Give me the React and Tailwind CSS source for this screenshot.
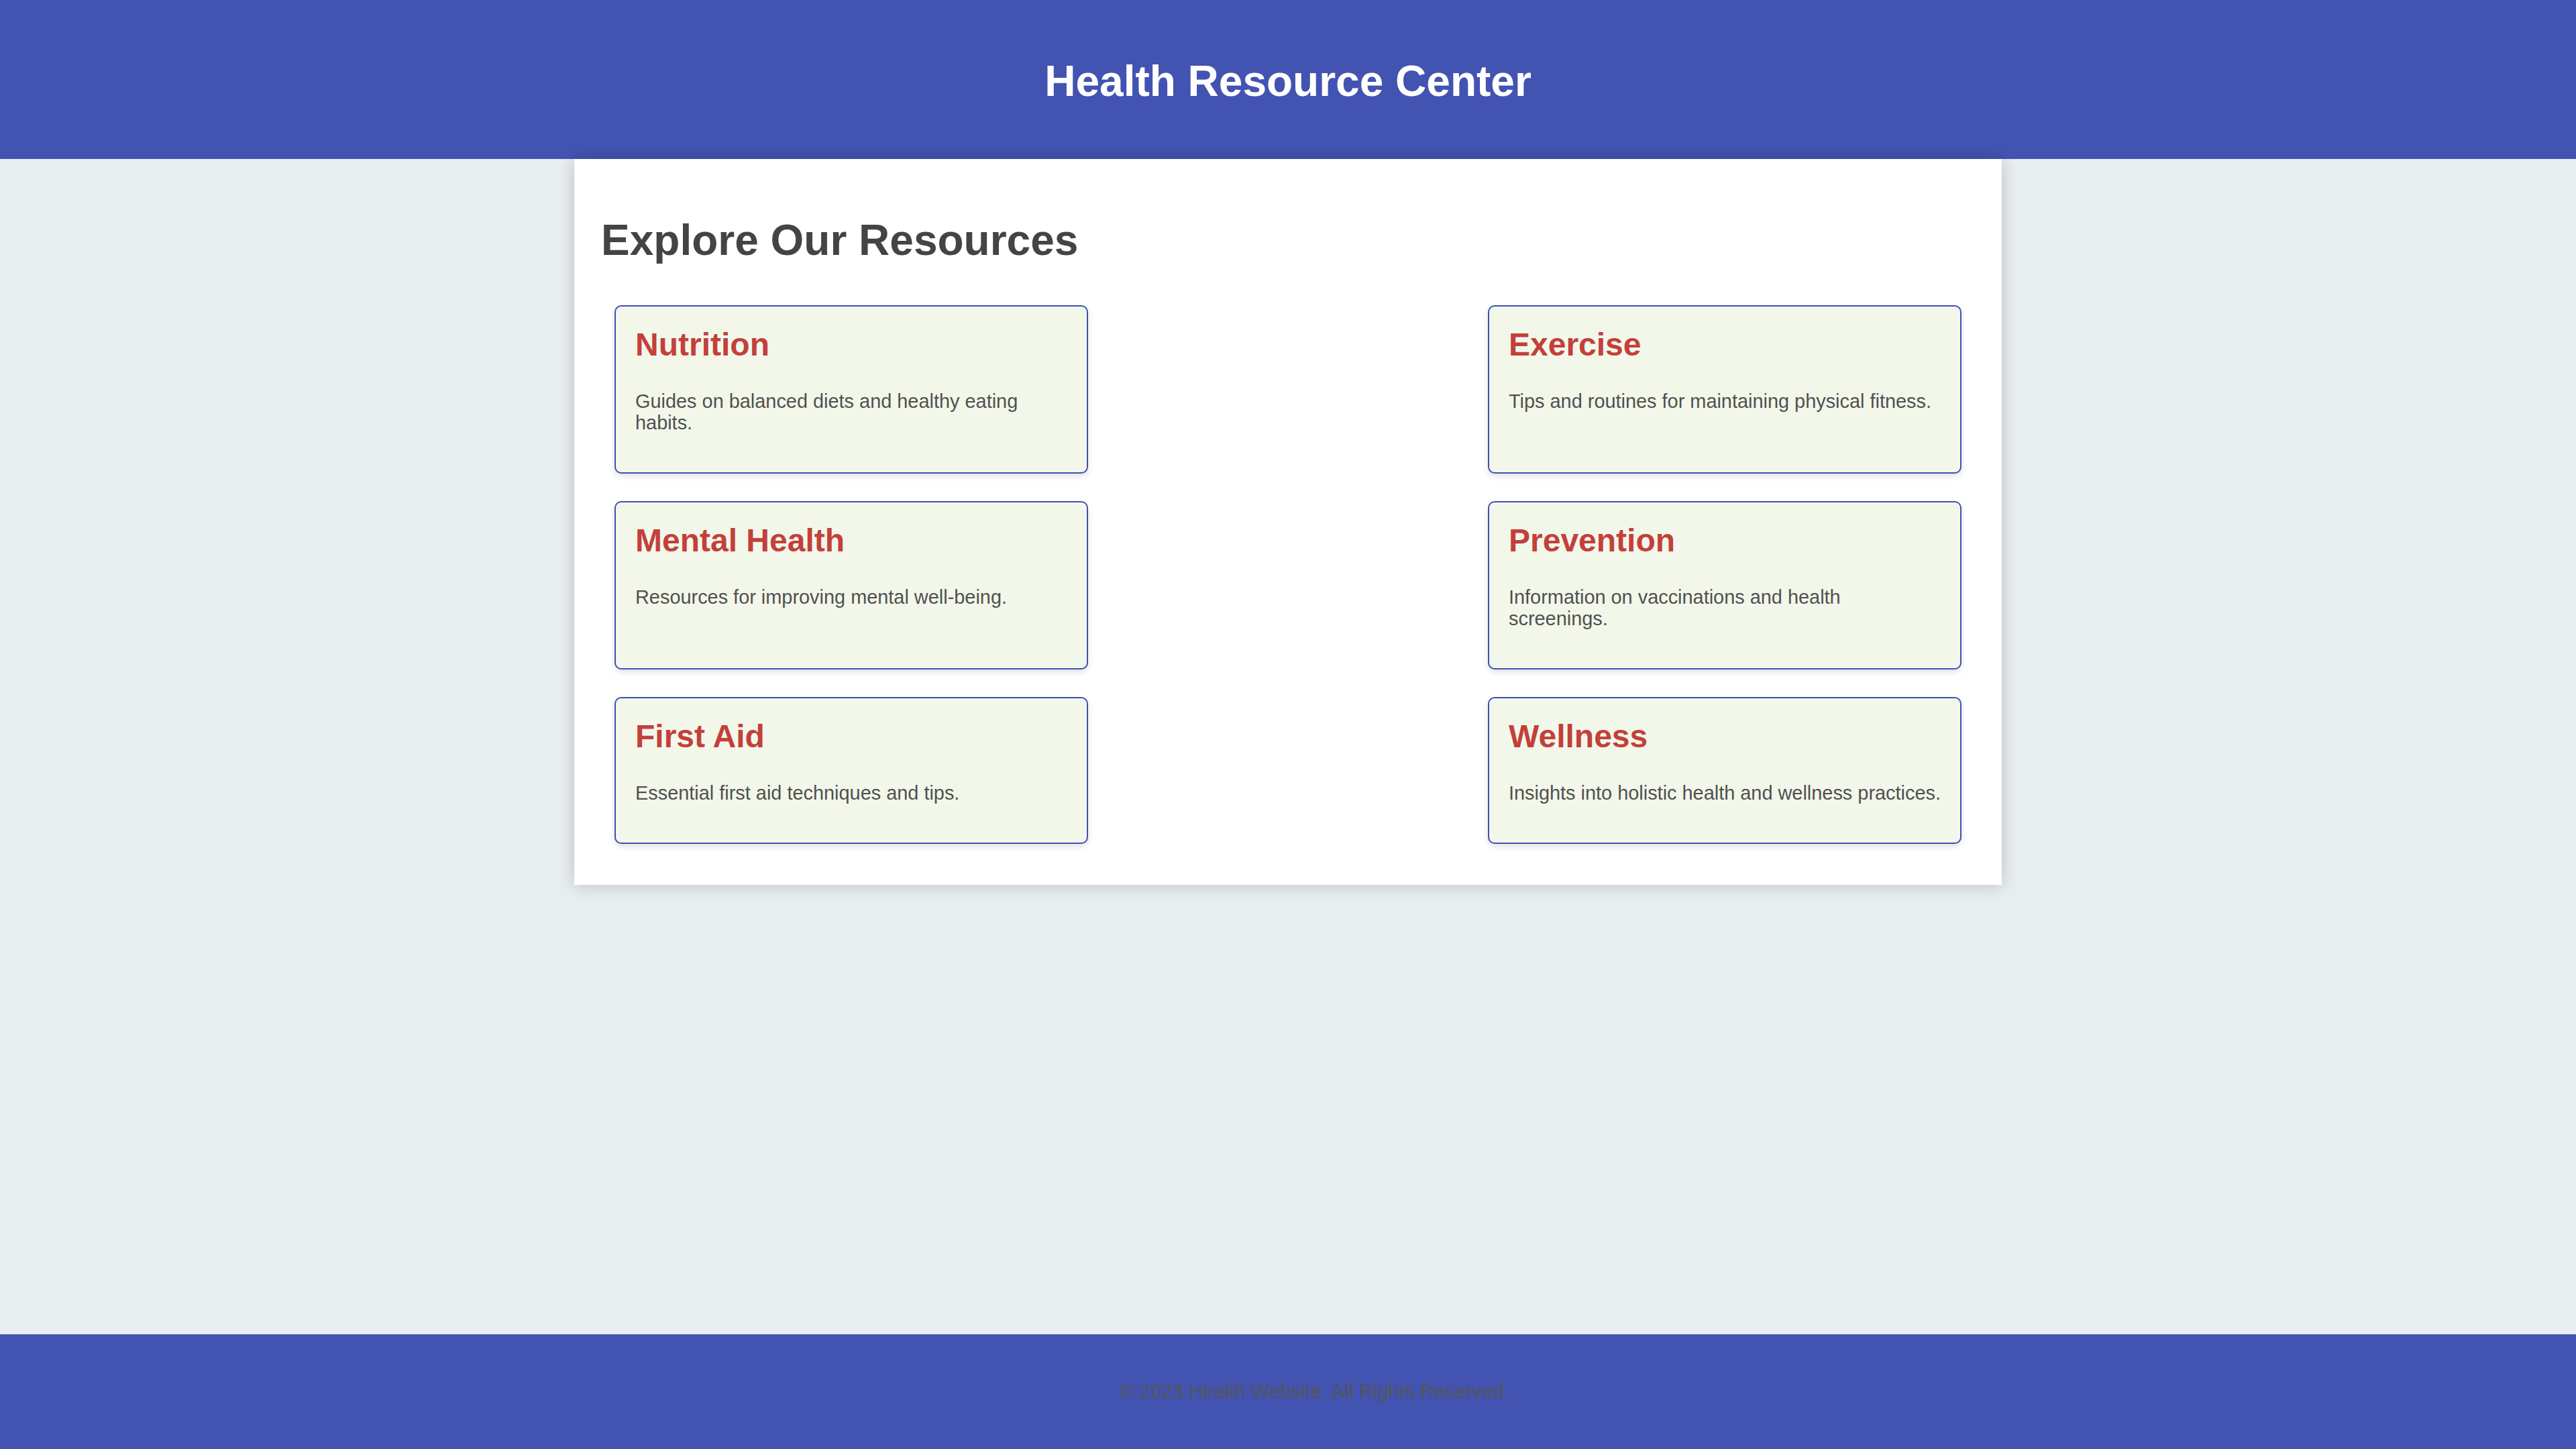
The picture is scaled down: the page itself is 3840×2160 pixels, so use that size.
import React from "react";

const cards = [
  { title: "Nutrition", text: "Guides on balanced diets and healthy eating habits." },
  { title: "Exercise", text: "Tips and routines for maintaining physical fitness." },
  { title: "Mental Health", text: "Resources for improving mental well-being." },
  { title: "Prevention", text: "Information on vaccinations and health screenings." },
  { title: "First Aid", text: "Essential first aid techniques and tips." },
  { title: "Wellness", text: "Insights into holistic health and wellness practices." },
];

export default function App() {
  return (
    <div
      className="min-h-screen w-full bg-[#e8edf0]"
      style={{ fontFamily: '"Liberation Sans", Arial, sans-serif' }}
    >
      <header className="bg-[#4353b1] pt-[84px] pb-[79px] text-center">
        <h1 className="text-[64px] leading-[74px] font-bold text-white">Health Resource Center</h1>
      </header>
      <main className="mx-auto w-[2128px] bg-white pt-[84px] pb-[61px] shadow-[0_0_24px_rgba(0,0,0,0.2)]">
        <h2 className="pl-[40px] text-[64px] leading-[74px] font-bold text-[#444444]">Explore Our Resources</h2>
        <div className="mt-[60px] grid grid-cols-[706px_706px] justify-between gap-y-[41px] px-[60px]">
          {cards.map((c) => (
            <div
              key={c.title}
              className="rounded-[10px] border-2 border-[#3f51b5] bg-[#f2f7ea] px-[29px] pt-[30px] pb-[30px] shadow-[0_4px_10px_rgba(0,0,0,0.12)]"
            >
              <h3 className="text-[48px] leading-[54px] font-bold text-[#c3403a]">{c.title}</h3>
              <p className="mt-[41px] mb-[28px] text-[28.9px] leading-[32px] text-[#505050]">{c.text}</p>
            </div>
          ))}
        </div>
      </main>
      <footer className="fixed bottom-0 left-0 w-full bg-[#4353b1] pl-[80px] pt-[69px] pb-[70px] text-center">
        <p className="text-[29.3px] leading-[32px] text-[#555555]">© 2023 Health Website. All Rights Reserved.</p>
      </footer>
    </div>
  );
}
